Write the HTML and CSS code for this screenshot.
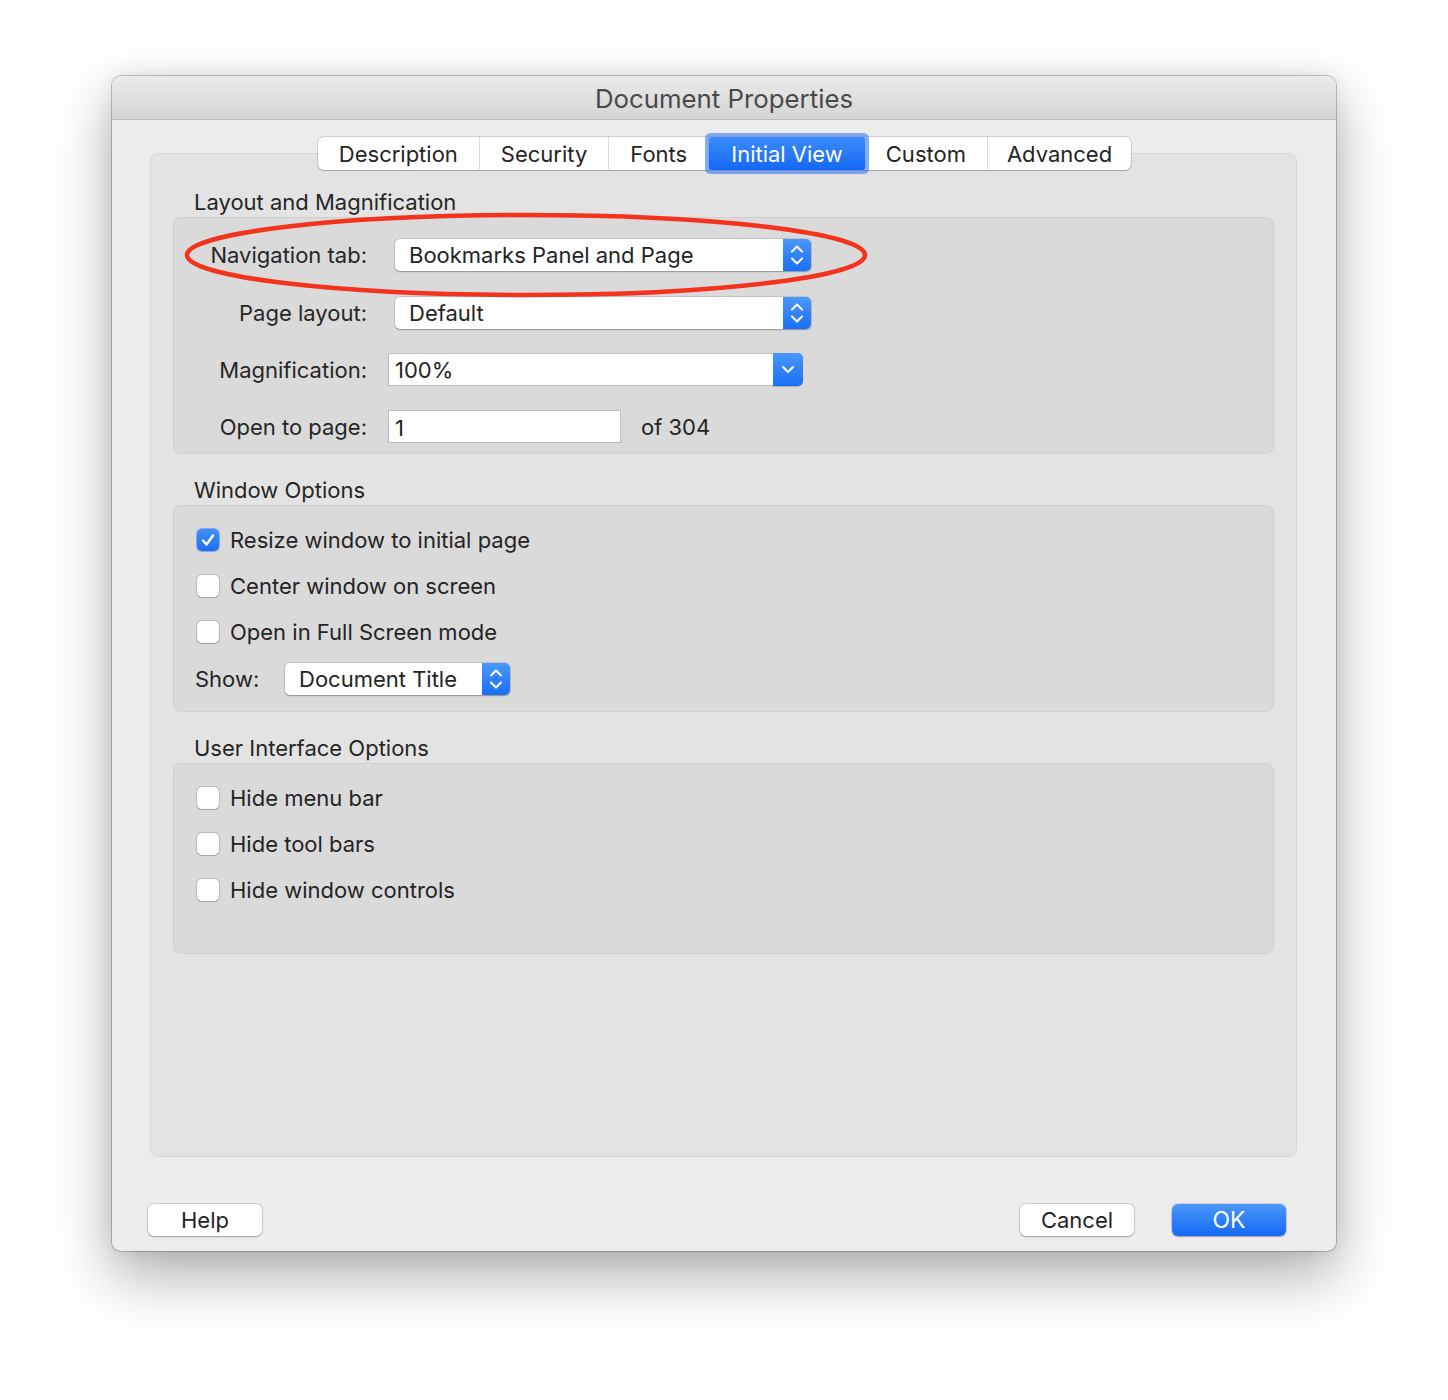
FILE: index.html
```html
<!DOCTYPE html>
<html>
<head>
<meta charset="utf-8">
<link rel="stylesheet" href="styles.css">
</head>
<body>
<div class="window">
  <div class="titlebar">Document Properties</div>
  <div class="content">
    <div class="tabs">
      <div class="tab">Description</div>
      <div class="tab">Security</div>
      <div class="tab">Fonts</div>
      <div class="tab selected">Initial View</div>
      <div class="tab">Custom</div>
      <div class="tab last">Advanced</div>
    </div>
    <div class="tabbox">
      <div class="group-label">Layout and Magnification</div>
      <div class="group group-layout">
        <svg class="annotation" viewBox="0 0 686 88" width="686" height="88"><ellipse cx="343" cy="44" rx="339" ry="40" fill="none" stroke="#f3331c" stroke-width="4.6"/></svg>
        <div class="form-row row-nav">
          <div class="form-label">Navigation tab:</div>
          <div class="popup wide"><span class="popup-text">Bookmarks Panel and Page</span><span class="popup-arrow"><svg viewBox="0 0 28 32" width="28" height="32"><path d="M9 12.5 L14 7.5 L19 12.5 M9 19.5 L14 24.5 L19 19.5" fill="none" stroke="#fff" stroke-width="2" stroke-linecap="round" stroke-linejoin="round"/></svg></span></div>
        </div>
        <div class="form-row row-layout">
          <div class="form-label">Page layout:</div>
          <div class="popup wide"><span class="popup-text">Default</span><span class="popup-arrow"><svg viewBox="0 0 28 32" width="28" height="32"><path d="M9 12.5 L14 7.5 L19 12.5 M9 19.5 L14 24.5 L19 19.5" fill="none" stroke="#fff" stroke-width="2" stroke-linecap="round" stroke-linejoin="round"/></svg></span></div>
        </div>
        <div class="form-row row-mag">
          <div class="form-label">Magnification:</div>
          <div class="combo"><span class="combo-text">100%</span><span class="combo-arrow"><svg viewBox="0 0 30 33" width="30" height="33"><path d="M10 14 L15 19 L20 14" fill="none" stroke="#fff" stroke-width="2" stroke-linecap="round" stroke-linejoin="round"/></svg></span></div>
        </div>
        <div class="form-row row-page">
          <div class="form-label">Open to page:</div>
          <div class="textfield">1</div>
          <div class="of-text">of 304</div>
        </div>
      </div>

      <div class="group-label">Window Options</div>
      <div class="group group-window">
        <div class="check-row"><span class="checkbox checked"><svg viewBox="0 0 22 22" width="22" height="22"><path d="M6 11.5 L9.5 15.5 L16 6.5" fill="none" stroke="#fff" stroke-width="2.4" stroke-linecap="round" stroke-linejoin="round"/></svg></span><span>Resize window to initial page</span></div>
        <div class="check-row"><span class="checkbox"></span><span>Center window on screen</span></div>
        <div class="check-row"><span class="checkbox"></span><span>Open in Full Screen mode</span></div>
        <div class="show-row">
          <span class="show-label">Show:</span>
          <div class="popup small"><span class="popup-text">Document Title</span><span class="popup-arrow"><svg viewBox="0 0 28 32" width="28" height="32"><path d="M9 12.5 L14 7.5 L19 12.5 M9 19.5 L14 24.5 L19 19.5" fill="none" stroke="#fff" stroke-width="2" stroke-linecap="round" stroke-linejoin="round"/></svg></span></div>
        </div>
      </div>

      <div class="group-label">User Interface Options</div>
      <div class="group group-ui">
        <div class="check-row"><span class="checkbox"></span><span>Hide menu bar</span></div>
        <div class="check-row"><span class="checkbox"></span><span>Hide tool bars</span></div>
        <div class="check-row"><span class="checkbox"></span><span>Hide window controls</span></div>
      </div>
    </div>
    <div class="buttons">
      <div class="button">Help</div>
      <div class="spacer"></div>
      <div class="button">Cancel</div>
      <div class="button primary">OK</div>
    </div>
  </div>
</div>
</body>
</html>
```
FILE: styles.css
```css
html, body {
  margin: 0;
  padding: 0;
  background: #ffffff;
}
body {
  font-family: Inter, "Noto Sans", "Liberation Sans", sans-serif;
  color: #242424;
  font-size: 22px;
  padding: 76px 0 0 112px;
  height: 1400px;
  box-sizing: border-box;
}
.window {
  width: 1224px;
  height: 1175px;
  border-radius: 9px;
  background: #ececec;
  box-shadow: 0 0 0 1px rgba(0,0,0,0.22), 0 24px 60px rgba(0,0,0,0.33), 0 0 20px rgba(0,0,0,0.08);
  overflow: hidden;
  display: flex;
  flex-direction: column;
}
.titlebar {
  height: 43px;
  line-height: 46px;
  text-align: center;
  font-size: 25.8px;
  color: #4a4a4a;
  background: linear-gradient(#ebebeb, #d5d5d5);
  border-bottom: 1px solid #bdbdbd;
  flex: none;
}
.content {
  flex: 1;
  padding: 17px 39px 0 38px;
  display: flex;
  flex-direction: column;
}
.tabs {
  display: flex;
  align-self: center;
  height: 33px;
  position: relative;
  z-index: 2;
  margin-left: 2px;
  background: #fff;
  border-radius: 6px;
  box-shadow: 0 0 0 1px rgba(0,0,0,0.12), 0 1px 1px rgba(0,0,0,0.18);
}
.tab {
  height: 33px;
  line-height: 34px;
  padding: 0 21px;
  border-right: 1px solid #dcdcdc;
  color: #242424;
}
.tab.last { border-right: none; padding: 0 19px 0 19px; }
.tab.selected {
  background: linear-gradient(#3b8cf9, #1568f5);
  color: #fff;
  box-shadow: 0 0 0 4px rgba(70, 130, 240, 0.65);
  border-right: none;
  border-radius: 2px;
  padding: 0 22px;
  position: relative;
}
.tabbox {
  margin-top: -17px;
  height: 1004px;
  box-sizing: border-box;
  background: #e3e3e3;
  border: 1px solid #d6d6d6;
  border-radius: 8px;
  padding: 35px 22px 0 22px;
}
.group-label {
  height: 26px;
  line-height: 26px;
  padding-left: 21px;
  margin-bottom: 2px;
  color: #262626;
}
.group {
  background: #dadada;
  border: 1px solid #d1d1d1;
  border-radius: 8px;
  box-sizing: border-box;
  position: relative;
}
.group-layout {
  height: 237px;
  padding-top: 20px;
  margin-bottom: 23px;
}
.annotation {
  position: absolute;
  left: 9px;
  top: -7px;
  pointer-events: none;
  z-index: 3;
}
.form-row {
  display: flex;
  align-items: center;
  height: 33px;
}
.row-layout { margin-top: 25px; }
.row-mag { margin-top: 24px; }
.row-page { margin-top: 24px; }
.form-label {
  width: 193px;
  text-align: right;
  flex: none;
  color: #262626;
}
.popup {
  display: flex;
  align-items: center;
  height: 32px;
  background: #fff;
  border-radius: 5px;
  box-shadow: 0 0 0 1px rgba(0,0,0,0.1), 0 1px 1.5px rgba(0,0,0,0.25);
  overflow: hidden;
}
.popup.wide {
  width: 416px;
  margin-left: 28px;
}
.popup-text {
  flex: 1;
  padding-left: 14px;
  white-space: nowrap;
  line-height: 32px;
}
.popup-arrow {
  width: 28px;
  height: 32px;
  flex: none;
  background: linear-gradient(#4b97fa, #1a6ff5);
  display: block;
}
.popup-arrow svg { display: block; }
.combo {
  display: flex;
  height: 33px;
  margin-left: 21px;
  width: 415px;
}
.combo-text {
  flex: 1;
  background: #fff;
  border: 1px solid #bcbcbc;
  border-right: none;
  box-sizing: border-box;
  padding-left: 6px;
  line-height: 33px;
}
.combo-arrow {
  width: 30px;
  height: 33px;
  flex: none;
  background: linear-gradient(#4b97fa, #1a6ff5);
  border-radius: 0 5px 5px 0;
  box-shadow: 0 1px 1px rgba(0,0,0,0.2);
}
.combo-arrow svg { display: block; }
.textfield {
  margin-left: 21px;
  width: 233px;
  height: 33px;
  background: #fff;
  border: 1px solid #bcbcbc;
  box-sizing: border-box;
  padding-left: 6px;
  line-height: 35px;
}
.of-text {
  margin-left: 20px;
}
.group-window {
  height: 207px;
  padding-top: 22px;
  margin-bottom: 23px;
}
.group-ui {
  height: 191px;
  padding-top: 22px;
}
.check-row {
  display: flex;
  align-items: center;
  height: 24px;
  padding-left: 23px;
  margin-bottom: 22px;
  white-space: nowrap;
}
.checkbox {
  width: 22px;
  height: 22px;
  box-sizing: border-box;
  border-radius: 5px;
  background: #fff;
  box-shadow: 0 0 0 1px rgba(0,0,0,0.14), 0 1px 1px rgba(0,0,0,0.15);
  margin-right: 11px;
  flex: none;
}
.checkbox svg { display: block; }
.checkbox.checked {
  background: linear-gradient(#3f8ff9, #1f6ff4);
  box-shadow: 0 0 0 1px rgba(20,90,220,0.4);
}
.show-row {
  display: flex;
  align-items: center;
  padding-left: 21px;
  margin-top: -4px;
  height: 33px;
}
.show-label { width: 90px; flex: none; }
.popup.small { width: 225px; }
.buttons {
  display: flex;
  align-items: center;
  margin-top: 47px;
  margin-left: -2px;
  margin-right: 11px;
}
.spacer { flex: 1; }
.button {
  width: 114px;
  height: 32px;
  line-height: 33px;
  text-align: center;
  background: #fff;
  border-radius: 6px;
  box-shadow: 0 0 0 1px rgba(0,0,0,0.12), 0 1px 1.5px rgba(0,0,0,0.22);
  color: #242424;
}
.button.primary {
  margin-left: 38px;
  background: linear-gradient(#4d98f9, #1369f5);
  color: #fff;
  font-size: 23px;
}
```
